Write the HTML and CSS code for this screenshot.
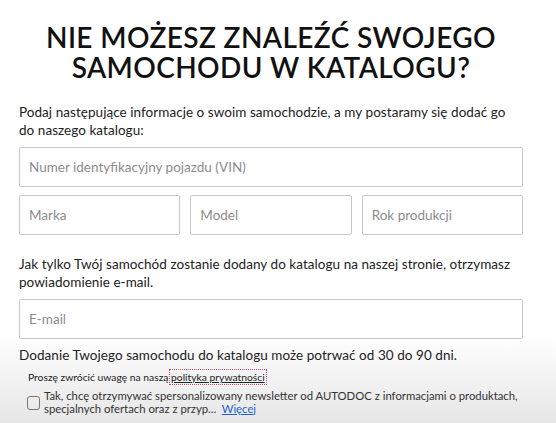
FILE: index.html
```html
<!DOCTYPE html>
<html lang="pl">
<head>
<meta charset="utf-8">
<title>Nie możesz znaleźć swojego samochodu</title>
<link rel="stylesheet" href="styles.css">
</head>
<body>
<div class="modal">
  <h1 class="title">Nie możesz znaleźć swojego<br>samochodu w katalogu?</h1>
  <p class="intro">Podaj następujące informacje o swoim samochodzie, a my postaramy się dodać go do naszego katalogu:</p>
  <input class="field" type="text" placeholder="Numer identyfikacyjny pojazdu (VIN)">
  <div class="row">
    <input class="field" type="text" placeholder="Marka">
    <input class="field" type="text" placeholder="Model">
    <input class="field" type="text" placeholder="Rok produkcji">
  </div>
  <p class="notice">Jak tylko Twój samochód zostanie dodany do katalogu na naszej stronie, otrzymasz powiadomienie e-mail.</p>
  <input class="field" type="email" placeholder="E-mail">
  <p class="duration">Dodanie Twojego samochodu do katalogu może potrwać od 30 do 90 dni.</p>
  <p class="privacy">Proszę zwrócić uwagę na naszą <a class="privacy-link" href="#">polityka prywatności</a></p>
  <label class="consent">
    <span class="checkbox"></span>
    <span class="consent-text">Tak, chcę otrzymywać spersonalizowany newsletter od AUTODOC z informacjami o produktach, specjalnych ofertach oraz z przyp... &nbsp;<a class="more" href="#">Więcej</a></span>
  </label>
</div>
</body>
</html>
```
FILE: styles.css
```css
html, body {
  margin: 0;
  padding: 0;
}
body {
  width: 556px;
  height: 423px;
  overflow: hidden;
  font-family: "Lato", "Liberation Sans", sans-serif;
  color: #222;
  background: linear-gradient(to bottom, #ffffff 0, #ffffff 335px, #e6e6e6 423px);
}
.modal {
  padding: 0 33px 0 19px;
  display: flex;
  flex-direction: column;
}
.title {
  margin: 22px 0 0;
  text-align: center;
  text-transform: uppercase;
  font-size: 28px;
  line-height: 30px;
  font-weight: 600;
  letter-spacing: 0.4px;
  color: #111;
}
.intro,
.notice {
  margin: 21px 0 8px;
  padding-right: 4px;
  font-size: 13.5px;
  line-height: 18px;
  letter-spacing: 0.05px;
}
.notice {
  margin-top: 20px;
}
.field {
  box-sizing: border-box;
  height: 40px;
  width: 100%;
  margin: 0;
  padding: 0 9px;
  border: 1px solid #c9c9c9;
  border-radius: 2px;
  background: #fff;
  font-family: inherit;
  font-size: 13.5px;
  color: #222;
  outline: none;
}
.field::placeholder {
  color: #8c8c8c;
}
.row {
  display: grid;
  grid-template-columns: 1fr 1fr 1fr;
  column-gap: 10px;
  margin-top: 8px;
}
.duration {
  margin: 7px 0 0;
  font-size: 13.5px;
  line-height: 18px;
  letter-spacing: 0.05px;
}
.privacy {
  margin: 7px 0 0 9px;
  font-size: 10.3px;
  line-height: 13px;
}
.privacy-link {
  color: #222;
  text-decoration: underline;
  outline: 1px dotted #d2477a;
  outline-offset: 1px;
}
.consent {
  display: flex;
  align-items: center;
  gap: 4px;
  margin: 6px 0 0 8px;
}
.checkbox {
  flex: none;
  box-sizing: border-box;
  width: 13px;
  height: 14px;
  border: 1.5px solid #777;
  border-radius: 3px;
}
.consent-text {
  font-size: 11.3px;
  line-height: 12.5px;
  color: #333;
}
.more {
  color: #1f5fd1;
  text-decoration: underline;
}
```
